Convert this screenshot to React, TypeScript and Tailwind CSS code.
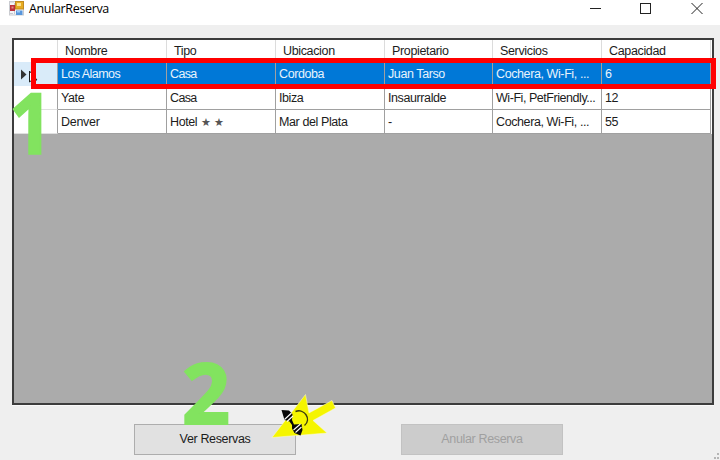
import React from "react";

const columns = ["Nombre", "Tipo", "Ubicacion", "Propietario", "Servicios", "Capacidad"];

const rows = [
  ["Los Alamos", "Casa", "Cordoba", "Juan Tarso", "Cochera, Wi-Fi, ...", "6"],
  ["Yate", "Casa", "Ibiza", "Insaurralde", "Wi-Fi, PetFriendly...", "12"],
  ["Denver", "Hotel ★ ★", "Mar del Plata", "-", "Cochera, Wi-Fi, ...", "55"],
];

const tracking: Record<string, string> = {
  "Los Alamos": "tracking-[-0.55px]",
  Casa: "tracking-[-0.65px]",
  Cordoba: "tracking-[-0.4px]",
  "Wi-Fi, PetFriendly...": "tracking-[-0.45px]",
  Denver: "tracking-[-0.3px]",
};

const grid = "grid grid-cols-[44px_109px_109px_109px_108px_109px_109px]";

function FormIcon() {
  return (
    <svg className="ml-[9px] mt-px h-[15px] w-[15px] shrink-0" viewBox="0 0 15 15">
      <rect x="0.5" y="0.5" width="14" height="13.5" fill="#f5f5f6" stroke="#c9cbd0" />
      <path d="M1 1h4M1 12.5h3M5.5 2v11" stroke="#c5c9d2" />
      <rect x="1" y="4" width="5" height="6" fill="#bd3039" />
      <rect x="2.5" y="5.5" width="2" height="2" fill="#e48984" />
      <rect x="6.5" y="0.5" width="8" height="7.5" fill="#e6ab20" stroke="#c28a20" />
      <rect x="8" y="2" width="4" height="3" fill="#ffe38a" />
      <rect x="7" y="9.5" width="6.5" height="4.5" fill="#5796dc" />
      <rect x="8" y="10" width="3" height="1.5" fill="#9ac8f4" />
    </svg>
  );
}

function TitleBar() {
  return (
    <header className="flex h-[25px] bg-white">
      <FormIcon />
      <h1 className="ml-[5px] font-['Open_Sans',sans-serif] text-[12.5px] leading-[18px] tracking-[-0.35px] text-black">
        AnularReserva
      </h1>
      <svg className="ml-auto h-[25px] w-[140px]" viewBox="0 0 140 25" fill="none" stroke="#222">
        <path d="M10 8.5h11" />
        <rect x="60.5" y="3.5" width="10" height="10" />
        <path d="M111.5 3l11 11M122.5 3l-11 11" />
      </svg>
    </header>
  );
}

function CellText({ value }: { value: string }) {
  const [label, ...stars] = value.split(" ★");
  return (
    <>
      {label}
      {stars.length > 0 && <span className="text-[10.5px] tracking-[0.4px] text-[#555]">{" ★".repeat(stars.length)}</span>}
    </>
  );
}

function ReservationTable() {
  return (
    <div className="ml-3 mt-[13px] h-[367px] w-[702px] border-2 border-[#3c3c3c] bg-[#ababab] text-[12.5px] text-[#1c1c1c] shadow-[0_1px_0_#fafafa]">
      <div className={`${grid} h-[22px] bg-white`}>
        <div className="border-r border-[#dcdcdc]" />
        {columns.map((name) => (
          <div key={name} className="border-r border-[#dcdcdc] pl-[7px] pt-[2px] leading-[18px] tracking-[-0.35px]">
            {name}
          </div>
        ))}
      </div>
      {rows.map((row, i) => (
        <div key={row[0]} className={`${grid} h-[24px] ${i === 0 ? "bg-[#0078d7] text-[#e8f3fc]" : "bg-white"}`}>
          <div className={`border-b border-r border-b-[#e0e0e0] border-r-[#a0a0a0] ${i === 0 ? "bg-[#d9ebf9]" : "bg-white"}`}>
            {i === 0 && (
              <svg className="h-[24px] w-[30px]" viewBox="0 0 30 24">
                <path d="M7 7.500v10l5.500-5z" fill="#333" />
                <path d="M15.500 9v11l2.500-2h5z" fill="#fff" stroke="#222" />
              </svg>
            )}
          </div>
          {row.map((v, j) => (
            <div
              key={j}
              className={`overflow-hidden whitespace-pre border-b border-r border-[#a0a0a0] pl-[3px] pt-[3px] leading-[18px] ${tracking[v] ?? "tracking-[-0.4px]"}`}
            >
              <CellText value={v} />
            </div>
          ))}
        </div>
      ))}
    </div>
  );
}

function SunglassesArrow() {
  return (
    <svg className="absolute left-[270px] top-[392px] h-[48px] w-[68px]" viewBox="0 0 68 48">
      <path d="M2 45.500L35.500 2.500 39 21 62 8.500 65.500 16 43 28.500 57 41z" fill="#f5f500" stroke="#fbfbd8" strokeWidth="0.5" />
      <path d="M25.500 19.500C34 16 42 27 34.500 33.500" fill="none" stroke="#3b3b12" strokeWidth="1.4" />
      <path d="M11.500 18L19 18.500 22.500 22 22 28 24 32.500 31.500 32 32.500 38 30.500 43.500 24.500 41 22 36.500 22 33 19.500 29.500 14.500 28z" fill="#080808" />
      <path d="M14.500 27.500l7-6.500M17 29.500l6-5.500M23.500 38l7-6M25.500 40.500l6-5.500" stroke="white" strokeWidth="1.100" />
    </svg>
  );
}

export default function App() {
  return (
    <main className="relative h-[460px] w-[720px] overflow-hidden bg-[#efefef] font-['Liberation_Sans',Arial,sans-serif]">
      <TitleBar />
      <ReservationTable />
      <div className="ml-[134px] mt-[19px] flex gap-[105px] text-[12.5px] tracking-[-0.35px]">
        <button className="h-[31px] w-[162px] border border-[#adadad] bg-[#e1e1e1] text-[#1c1c1c]">Ver Reservas</button>
        <button disabled className="h-[31px] w-[162px] border border-[#c2c2c2] bg-[#cccccc] tracking-[-0.35px] text-[#a0a0a0]">Anular Reserva</button>
      </div>
      <div className="absolute left-[31px] top-[58px] h-[31px] w-[685px] border-[5px] border-[#ff0000]" />
      <span className="absolute left-[9px] top-[91px] origin-left scale-x-[0.91] font-['Open_Sans',sans-serif] text-[84px] font-bold leading-[62px] text-[#82e35f] [-webkit-text-stroke:1.6px_#82e35f]">1</span>
      <span className="absolute left-[182px] top-[361px] font-['Open_Sans',sans-serif] text-[84px] font-bold leading-[62px] text-[#82e35f] [-webkit-text-stroke:2px_#82e35f]">2</span>
      <SunglassesArrow />
      <svg className="absolute bottom-0 right-0 h-[8px] w-[8px]" viewBox="0 0 8 8" fill="#b5b5b5">
        <path d="M5 1h2v2H5zM2 5h2v2H2zM5 5h2v2H5z" />
      </svg>
    </main>
  );
}
